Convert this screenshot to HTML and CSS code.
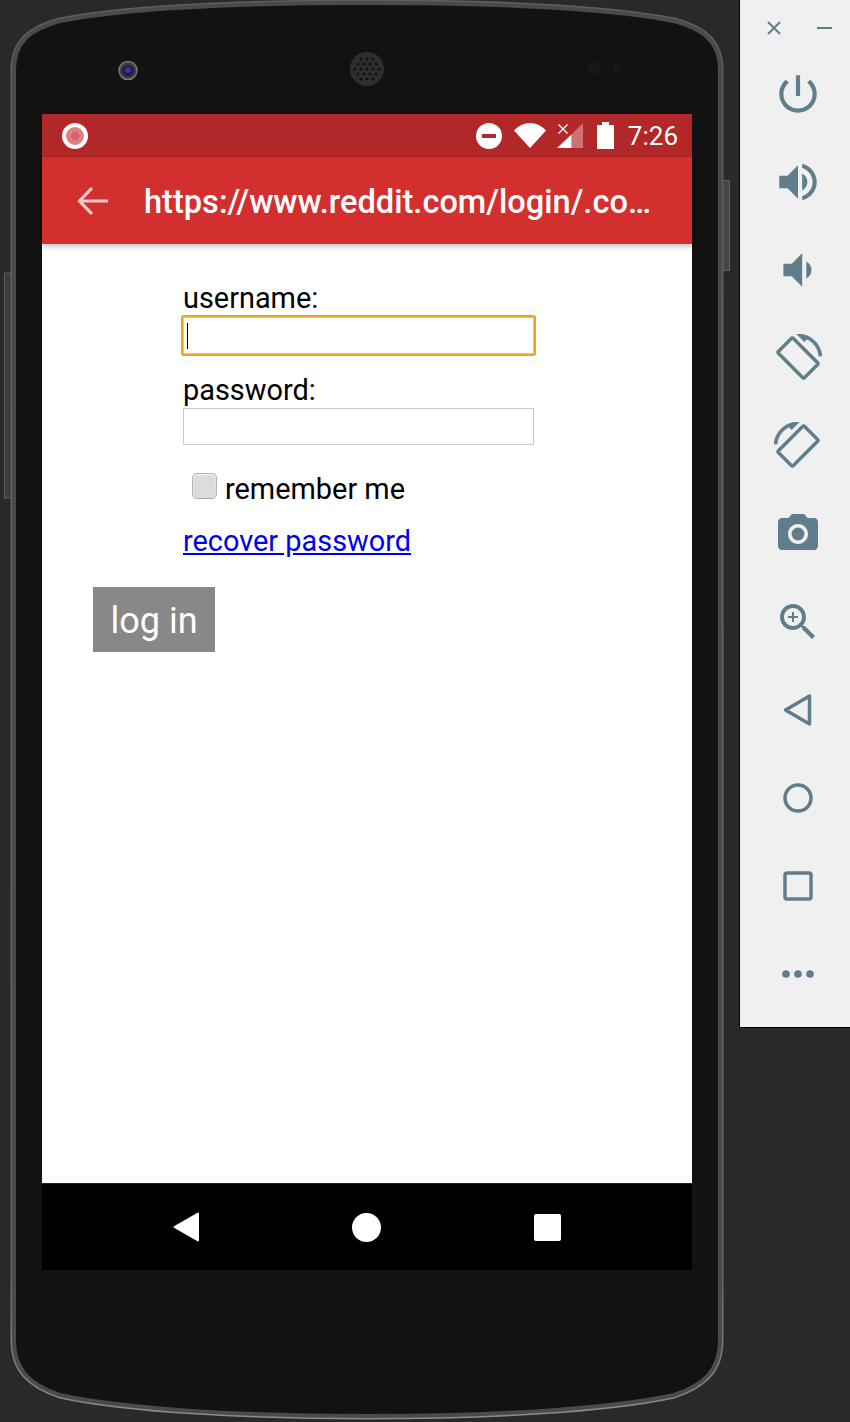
FILE: index.html
```html
<!DOCTYPE html>
<html lang="en">
<head>
    <meta charset="UTF-8">
    <meta name="viewport" content="width=device-width, initial-scale=1.0">
    <title>Android Emulator - reddit login</title>
    <link rel="stylesheet" href="styles.css">
</head>
<body>
    <div class="device">
        <svg class="shell" width="738" height="1422" viewBox="0 0 738 1422">
            <defs>
                <linearGradient id="rim" x1="0" y1="0" x2="0" y2="1">
                    <stop offset="0" stop-color="#5e5e5e"/>
                    <stop offset="0.9" stop-color="#666"/>
                    <stop offset="1" stop-color="#8c8c8c"/>
                </linearGradient>
            </defs>
            <rect x="4.500" y="273" width="7" height="225" fill="#3c3c3c" stroke="#5f5f5f"/>
            <rect x="722" y="180.500" width="7.500" height="90" fill="#474747" stroke="#5f5f5f"/>
            <path class="shell-rim" d="M14 70C14 42 30 29 60 21C130 7 250 3 367 3C484 3 604 7 674 21C704 29 720 42 720 70V1340C720 1370 704 1385 674 1395C604 1410 484 1416 367 1416C250 1416 130 1410 60 1395C30 1385 14 1370 14 1340Z"/>
            <path class="shell-face" d="M14 70C14 42 30 29 60 21C130 7 250 3 367 3C484 3 604 7 674 21C704 29 720 42 720 70V1340C720 1370 704 1385 674 1395C604 1410 484 1416 367 1416C250 1416 130 1410 60 1395C30 1385 14 1370 14 1340Z"/>
            <circle cx="128" cy="70.500" r="9" fill="#3a3a3e" stroke="#77787c" stroke-width="1.500"/>
            <circle cx="128" cy="70.500" r="5.500" fill="#1c1c4a"/>
            <circle cx="128" cy="70" r="3" fill="#3236a0"/>
            <circle cx="367" cy="69" r="17" fill="#2e2e2e"/>
            <g fill="#111">
                <circle cx="367" cy="69" r="1.500"/><circle cx="361" cy="69" r="1.500"/><circle cx="373" cy="69" r="1.500"/>
                <circle cx="355" cy="69" r="1.500"/><circle cx="379" cy="69" r="1.500"/>
                <circle cx="364" cy="64" r="1.500"/><circle cx="370" cy="64" r="1.500"/><circle cx="358" cy="64" r="1.500"/><circle cx="376" cy="64" r="1.500"/>
                <circle cx="364" cy="74" r="1.500"/><circle cx="370" cy="74" r="1.500"/><circle cx="358" cy="74" r="1.500"/><circle cx="376" cy="74" r="1.500"/>
                <circle cx="361" cy="59" r="1.500"/><circle cx="367" cy="59" r="1.500"/><circle cx="373" cy="59" r="1.500"/>
                <circle cx="361" cy="79" r="1.500"/><circle cx="367" cy="79" r="1.500"/><circle cx="373" cy="79" r="1.500"/>
            </g>
            <circle cx="594" cy="68" r="7" fill="#181818"/>
            <circle cx="617" cy="68" r="4" fill="#181818"/>
        </svg>

        <div class="screen">
            <div class="status-bar">
                <svg class="rec-icon" width="28" height="28" viewBox="0 0 28 28">
                    <circle cx="14" cy="14" r="11" fill="#df8085" stroke="#fff" stroke-width="4"/>
                    <circle cx="14" cy="14" r="4" fill="#d4626a"/>
                </svg>
                <div class="status-icons">
                    <svg width="26" height="26" viewBox="0 0 26 26">
                        <circle cx="13" cy="13" r="13" fill="#fff"/>
                        <rect x="6" y="11" width="14" height="4" fill="#b22727"/>
                    </svg>
                    <svg class="wifi" width="32" height="25" viewBox="0 0 32 25">
                        <path d="M0 7.500C4 3 10 0 16 0S28 3 32 7.500L16 25Z" fill="#fff"/>
                    </svg>
                    <svg class="signal" width="26" height="26" viewBox="0 0 26 26">
                        <path d="M26 1V26H14.500V12.500Z" fill="#fff" opacity="0.35"/>
                        <path d="M14.500 12.500V26H0Z" fill="#fff"/>
                        <path d="M1.500 2.500L10.500 11.500M10.500 2.500L1.500 11.500" stroke="#fff" stroke-width="1.300"/>
                    </svg>
                    <svg class="battery" width="17" height="27" viewBox="0 0 17 27">
                        <path d="M5 0H12V3H17V27H0V3H5Z" fill="#fff"/>
                    </svg>
                    <span class="clock">7:26</span>
                </div>
            </div>
            <div class="app-bar">
                <svg class="back-arrow" width="32" height="30" viewBox="0 0 32 30">
                    <path d="M31 15H3M15 2L2.500 15L15 28" fill="none" stroke="#f8cbc8" stroke-width="3.200"/>
                </svg>
                <span class="app-title">https://www.reddit.com/login/.co…</span>
            </div>

            <div class="page">
                <form class="login-form">
                    <label class="field-label username-label" for="user">username:</label>
                    <div class="input-wrap">
                        <input class="text-input is-focused" type="text" id="user">
                        <span class="caret"></span>
                    </div>
                    <label class="field-label password-label" for="passwd">password:</label>
                    <input class="text-input" type="password" id="passwd">
                    <div class="remember">
                        <input class="check" type="checkbox" id="rem">
                        <label for="rem">remember me</label>
                    </div>
                    <a class="recover" href="#">recover password</a>
                    <button class="login-btn" type="button">log in</button>
                </form>
            </div>

            <div class="nav-bar">
                <svg width="28" height="32" viewBox="0 0 28 32">
                    <path d="M26 2.500V29.500L2.500 16Z" fill="#fff" stroke="#fff" stroke-width="2" stroke-linejoin="round"/>
                </svg>
                <span class="nav-home"></span>
                <span class="nav-recent"></span>
            </div>
        </div>
    </div>

    <aside class="toolbar">
        <div class="window-btns">
            <svg width="16" height="16" viewBox="0 0 16 16">
                <path d="M2 2L14 14M14 2L2 14" stroke="#607d8b" stroke-width="2"/>
            </svg>
            <span class="minimize"></span>
        </div>
        <div class="tool">
            <svg width="50" height="50" viewBox="0 0 24 24"><path d="M13 3h-2v10h2V3zm4.830 2.170l-1.420 1.420C17.990 7.860 19 9.810 19 12c0 3.870-3.130 7-7 7s-7-3.130-7-7c0-2.190 1.010-4.140 2.580-5.420L6.170 5.170C4.230 6.820 3 9.260 3 12c0 4.970 4.030 9 9 9s9-4.030 9-9c0-2.740-1.230-5.180-3.170-6.830z"/></svg>
        </div>
        <div class="tool">
            <svg width="50" height="50" viewBox="0 0 24 24"><path d="M3 9v6h4l5 5V4L7 9H3zm13.500 3c0-1.770-1.020-3.290-2.500-4.030v8.050c1.480-.73 2.500-2.250 2.500-4.020zM14 3.230v2.060c2.890.86 5 3.540 5 6.710s-2.110 5.850-5 6.710v2.060c4.010-.91 7-4.490 7-8.770s-2.990-7.860-7-8.770z"/></svg>
        </div>
        <div class="tool">
            <svg width="50" height="50" viewBox="0 0 24 24"><path d="M18.500 12c0-1.770-1.020-3.290-2.500-4.030v8.050c1.480-.73 2.500-2.250 2.500-4.020zM5 9v6h4l5 5V4L9 9H5z"/></svg>
        </div>
        <div class="tool">
            <svg class="rotate" width="48" height="48" viewBox="0 0 24 24"><path d="M16.480 2.520c3.270 1.550 5.610 4.720 5.970 8.480h1.500C23.440 4.840 18.290 0 12 0l-.66.030 3.810 3.810 1.330-1.320zm-6.250-.77c-.59-.59-1.540-.59-2.120 0L1.750 8.110c-.59.59-.59 1.540 0 2.120l12.020 12.020c.59.59 1.540.59 2.120 0l6.360-6.360c.59-.59.59-1.540 0-2.120L10.230 1.750zm4.600 19.440L2.810 9.170l6.360-6.360 12.020 12.020-6.360 6.360z"/></svg>
        </div>
        <div class="tool">
            <svg class="rotate flip" width="48" height="48" viewBox="0 0 24 24"><path d="M16.480 2.520c3.270 1.550 5.610 4.720 5.970 8.480h1.500C23.440 4.840 18.290 0 12 0l-.66.030 3.810 3.810 1.330-1.320zm-6.250-.77c-.59-.59-1.540-.59-2.120 0L1.750 8.110c-.59.59-.59 1.540 0 2.120l12.020 12.020c.59.59 1.540.59 2.120 0l6.360-6.360c.59-.59.59-1.540 0-2.120L10.230 1.750zm4.600 19.440L2.810 9.170l6.360-6.360 12.020 12.020-6.360 6.360z"/></svg>
        </div>
        <div class="tool">
            <svg width="48" height="48" viewBox="0 0 24 24"><circle cx="12" cy="12" r="3.200"/><path d="M9 2L7.170 4H4c-1.100 0-2 .9-2 2v12c0 1.100.9 2 2 2h16c1.100 0 2-.9 2-2V6c0-1.100-.9-2-2-2h-3.170L15 2H9zm3 15c-2.760 0-5-2.240-5-5s2.240-5 5-5 5 2.240 5 5-2.240 5-5 5z"/></svg>
        </div>
        <div class="tool">
            <svg width="48" height="48" viewBox="0 0 24 24"><path d="M15.500 14h-.79l-.28-.27C15.410 12.590 16 11.110 16 9.500 16 5.910 13.090 3 9.500 3S3 5.910 3 9.500 5.910 16 9.500 16c1.610 0 3.090-.59 4.230-1.570l.27.28v.79l5 4.990L20.490 19l-4.990-5zm-6 0C7.010 14 5 11.990 5 9.500S7.010 5 9.500 5 14 7.010 14 9.500 11.990 14 9.500 14z"/><path d="M12 10h-2v2H9v-2H7V9h2V7h1v2h2v1z"/></svg>
        </div>
        <div class="tool">
            <svg width="32" height="36" viewBox="0 0 32 36"><path d="M27.500 4V32L3.500 18Z" class="outline" stroke-linejoin="round"/></svg>
        </div>
        <div class="tool">
            <svg width="32" height="32" viewBox="0 0 32 32"><circle cx="16" cy="16" r="13" class="outline"/></svg>
        </div>
        <div class="tool">
            <svg width="32" height="32" viewBox="0 0 32 32"><rect x="3" y="3" width="26" height="26" rx="2" class="outline"/></svg>
        </div>
        <div class="tool">
            <svg width="34" height="10" viewBox="0 0 34 10"><circle cx="5" cy="5" r="3.800"/><circle cx="17" cy="5" r="3.800"/><circle cx="29" cy="5" r="3.800"/></svg>
        </div>
    </aside>
</body>
</html>
```

FILE: styles.css
```css
body {
    margin: 0;
    display: flex;
    align-items: flex-start;
    height: 1422px;
    overflow: hidden;
    background: #292929;
    font-family: Roboto, sans-serif;
}

/* phone */
.device {
    position: relative;
    width: 650px;
    height: 1308px;
    padding: 114px 47px 0 42px;
}
.shell {
    position: absolute;
    left: 0;
    top: 0;
}
.shell-rim {
    fill: none;
    stroke: url(#rim);
    stroke-width: 7;
}
.shell-face {
    fill: #121212;
    stroke: #4a4a4a;
    stroke-width: 4;
}
.screen {
    position: relative;
    display: flex;
    flex-direction: column;
    width: 650px;
    height: 1156px;
    background: #fff;
}

/* status bar */
.status-bar {
    display: flex;
    align-items: center;
    justify-content: space-between;
    height: 43px;
    padding: 0 14px 0 19px;
    background: #b22727;
}
.rec-icon {
    display: block;
}
.status-icons {
    display: flex;
    align-items: center;
    color: #fff;
}
.wifi {
    margin-left: 12px;
    margin-top: -1px;
}
.signal {
    margin-left: 11px;
    margin-top: -1px;
}
.battery {
    margin-left: 14px;
    margin-top: -1px;
}
.clock {
    margin-left: 14px;
    font-size: 26px;
    line-height: 30px;
}

/* app bar */
.app-bar {
    position: relative;
    display: flex;
    align-items: center;
    height: 87px;
    padding-left: 35px;
    background: #d32f2f;
    box-shadow: 0 3px 5px rgba(0, 0, 0, 0.22);
}
.back-arrow {
    flex: none;
    margin-right: 35px;
}
.app-title {
    padding-top: 2px;
    color: #fff;
    font-size: 32.600px;
    font-weight: 500;
    white-space: nowrap;
}

/* login form */
.page {
    flex: 1;
}
.login-form {
    display: flex;
    flex-direction: column;
    align-items: flex-start;
    padding: 37px 0 0 141px;
}
.field-label {
    font-size: 28.900px;
    line-height: 34px;
    color: #000;
}
.username-label {
    margin-bottom: 2px;
}
.password-label {
    margin: 19px 0 1px;
}
.input-wrap {
    position: relative;
}
.text-input {
    display: block;
    width: 351px;
    height: 37px;
    margin: 0;
    padding: 0;
    box-sizing: border-box;
    border: 1px solid #c8c8c8;
    border-radius: 0;
    background: #fff;
    outline: none;
}
.is-focused {
    box-shadow: 0 0 0 2px #eca520;
    border-radius: 1px;
}
.caret {
    position: absolute;
    left: 3.500px;
    top: 6px;
    width: 1.500px;
    height: 26px;
    background: #000;
}
.remember {
    display: flex;
    align-items: center;
    margin: 28px 0 0 9px;
    font-size: 28.900px;
    line-height: 33px;
}
.check {
    appearance: none;
    width: 25px;
    height: 26px;
    margin: -8px 8px 0 0;
    border: 1px solid #b4b4b4;
    border-bottom-color: #a8a8a8;
    border-radius: 5px;
    background: #dcdcdc;
    box-shadow: inset 0 1px 2px #f4f4f4;
}
.recover {
    margin-top: 19px;
    font-size: 28.900px;
    line-height: 33px;
    color: #0000ee;
}
.login-btn {
    display: block;
    width: 122px;
    height: 65px;
    margin: 29px 0 0 -90px;
    padding: 2px 0 0;
    border: none;
    background: #888;
    color: #fff;
    font-family: Roboto, sans-serif;
    font-size: 36px;
    font-weight: 400;
}

/* android nav */
.nav-bar {
    display: flex;
    align-items: center;
    height: 86px;
    padding-left: 130px;
    border-top: 1px solid #222;
    background: #000;
}
.nav-home {
    width: 29px;
    height: 29px;
    margin-left: 152px;
    border-radius: 50%;
    background: #fff;
}
.nav-recent {
    width: 27px;
    height: 27px;
    margin-left: 153px;
    border-radius: 2px;
    background: #fff;
}

/* emulator side toolbar */
.toolbar {
    flex: none;
    width: 110px;
    height: 1027px;
    border-left: 1px solid #000;
    border-bottom: 1px solid #000;
    background: #f0f0f0;
    fill: #607d8b;
}
.window-btns {
    display: flex;
    align-items: center;
    justify-content: space-between;
    height: 50px;
    padding: 6px 18px 0 26px;
    box-sizing: border-box;
}
.minimize {
    width: 15px;
    height: 2px;
    background: #607d8b;
}
.tool {
    display: flex;
    align-items: center;
    justify-content: center;
    height: 88px;
    padding-left: 6px;
}
.tool svg {
    display: block;
}
.rotate path {
    stroke: #607d8b;
    stroke-width: 0.350;
}
.flip {
    transform: scaleX(-1);
}
.outline {
    fill: none;
    stroke: #607d8b;
    stroke-width: 3.500;
}
```
